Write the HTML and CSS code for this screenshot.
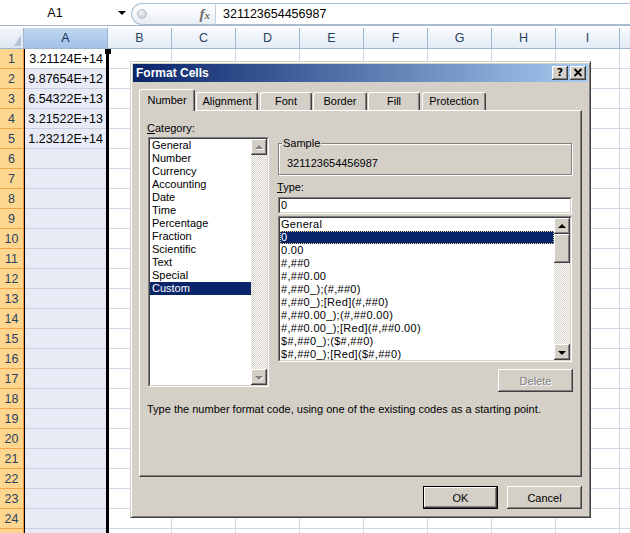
FILE: index.html
```html
<!DOCTYPE html>
<html>
<head>
<meta charset="utf-8">
<title>Format Cells</title>
<link rel="stylesheet" href="styles.css">
</head>
<body>
<div class="app">
  <div class="formula-bar">
    <div class="namebox"><span class="namebox-text">A1</span><span class="namebox-arrow"></span></div>
    <div class="fx-pill"><span class="fx-knob"></span><span class="fx-label">f<span class="fx-x">x</span></span></div>
    <div class="formula-input">321123654456987</div>
  </div>

  <div class="col-headers">
    <div class="corner"><svg class="corner-tri" width="7" height="11" viewBox="0 0 7 11"><polygon points="7,0 7,11 0,11" fill="#b4c4d8"/></svg></div>
    <div class="ch ch-a">A</div>
    <div class="ch">B</div>
    <div class="ch">C</div>
    <div class="ch">D</div>
    <div class="ch">E</div>
    <div class="ch">F</div>
    <div class="ch">G</div>
    <div class="ch">H</div>
    <div class="ch">I</div>
    <div class="ch ch-rest"></div>
  </div>

  <div class="sheet-body">
    <div class="row-headers">
      <div class="rh">1</div><div class="rh">2</div><div class="rh">3</div><div class="rh">4</div><div class="rh">5</div>
      <div class="rh">6</div><div class="rh">7</div><div class="rh">8</div><div class="rh">9</div><div class="rh">10</div>
      <div class="rh">11</div><div class="rh">12</div><div class="rh">13</div><div class="rh">14</div><div class="rh">15</div>
      <div class="rh">16</div><div class="rh">17</div><div class="rh">18</div><div class="rh">19</div><div class="rh">20</div>
      <div class="rh">21</div><div class="rh">22</div><div class="rh">23</div><div class="rh">24</div><div class="rh"></div>
    </div>
    <div class="col-a">
      <div class="cell cell-active">3.21124E+14</div>
      <div class="cell">9.87654E+12</div>
      <div class="cell">6.54322E+13</div>
      <div class="cell">3.21522E+13</div>
      <div class="cell">1.23212E+14</div>
      <div class="cell"></div><div class="cell"></div><div class="cell"></div><div class="cell"></div><div class="cell"></div>
      <div class="cell"></div><div class="cell"></div><div class="cell"></div><div class="cell"></div><div class="cell"></div>
      <div class="cell"></div><div class="cell"></div><div class="cell"></div><div class="cell"></div><div class="cell"></div>
      <div class="cell"></div><div class="cell"></div><div class="cell"></div><div class="cell"></div><div class="cell"></div>
      <span class="fill-handle"></span>
    </div>
    <div class="grid-rest"></div>
  </div>

  <div class="dialog">
    <div class="titlebar">
      <span class="title">Format Cells</span>
      <div class="title-btns">
        <span class="tbtn tbtn-help">?</span>
        <span class="tbtn"><svg width="10" height="9" viewBox="0 0 10 9"><path d="M1.5 1 L8.5 8 M8.5 1 L1.5 8" stroke="#000" stroke-width="1.8" fill="none"/></svg></span>
      </div>
    </div>
    <div class="dlg-body">
      <div class="tabs">
        <div class="tab tab-active tab-number">Number</div>
        <div class="tab tab-alignment">Alignment</div>
        <div class="tab tab-font">Font</div>
        <div class="tab tab-border">Border</div>
        <div class="tab tab-fill">Fill</div>
        <div class="tab tab-protection">Protection</div>
      </div>
      <div class="panel">
        <div class="panel-grid">
          <div class="left-col">
            <div class="label"><u>C</u>ategory:</div>
            <div class="listbox cat-list">
              <div class="listbox-inner">
                <div class="list-items">
                  <div class="item">General</div>
                  <div class="item">Number</div>
                  <div class="item">Currency</div>
                  <div class="item">Accounting</div>
                  <div class="item">Date</div>
                  <div class="item">Time</div>
                  <div class="item">Percentage</div>
                  <div class="item">Fraction</div>
                  <div class="item">Scientific</div>
                  <div class="item">Text</div>
                  <div class="item">Special</div>
                  <div class="item item-selected">Custom</div>
                </div>
                <div class="scrollbar">
                  <div class="sb-btn"><span class="arrow-up arrow-disabled"></span></div>
                  <div class="sb-track"></div>
                  <div class="sb-btn"><span class="arrow-down arrow-disabled"></span></div>
                </div>
              </div>
            </div>
          </div>
          <div class="right-col">
            <div class="groupbox">
              <span class="legend">Sample</span>
              <div class="sample-value">321123654456987</div>
            </div>
            <div class="label label-type"><u>T</u>ype:</div>
            <div class="textbox"><div class="textbox-inner">0</div></div>
            <div class="listbox fmt-list">
              <div class="listbox-inner">
                <div class="list-items">
                  <div class="item">General</div>
                  <div class="item item-selected item-focus">0</div>
                  <div class="item">0.00</div>
                  <div class="item">#,##0</div>
                  <div class="item">#,##0.00</div>
                  <div class="item">#,##0_);(#,##0)</div>
                  <div class="item">#,##0_);[Red](#,##0)</div>
                  <div class="item">#,##0.00_);(#,##0.00)</div>
                  <div class="item">#,##0.00_);[Red](#,##0.00)</div>
                  <div class="item">$#,##0_);($#,##0)</div>
                  <div class="item">$#,##0_);[Red]($#,##0)</div>
                </div>
                <div class="scrollbar">
                  <div class="sb-btn"><span class="arrow-up"></span></div>
                  <div class="sb-btn sb-thumb"></div>
                  <div class="sb-track"></div>
                  <div class="sb-btn"><span class="arrow-down"></span></div>
                </div>
              </div>
            </div>
            <div class="btn-row">
              <div class="btn btn-disabled">Delete</div>
            </div>
          </div>
        </div>
        <div class="description">Type the number format code, using one of the existing codes as a starting point.</div>
      </div>
      <div class="dlg-buttons">
        <div class="btn btn-default">OK</div>
        <div class="btn">Cancel</div>
      </div>
    </div>
  </div>
</div>
</body>
</html>
```

FILE: styles.css
```css
* { box-sizing: border-box; }
html, body { margin: 0; padding: 0; }
body {
  width: 630px;
  height: 533px;
  overflow: hidden;
  background: #fff;
  font-family: "Liberation Sans", Arial, sans-serif;
}
.app {
  position: relative;
  width: 630px;
  height: 533px;
  overflow: hidden;
  background: #fff;
}

/* ---------- formula bar ---------- */
.formula-bar {
  display: flex;
  height: 26px;
  border-bottom: 1px solid #a3b5cb;
  margin-bottom: 2px;
  font-size: 12.5px;
  color: #000;
}
.namebox {
  width: 131px;
  display: flex;
  align-items: center;
}
.namebox-text {
  width: 110px;
  text-align: center;
}
.namebox-arrow {
  margin-left: 8px;
  width: 0;
  height: 0;
  border-left: 4px solid transparent;
  border-right: 4px solid transparent;
  border-top: 4px solid #000;
}
.fx-pill {
  width: 84px;
  margin-top: 3px;
  height: 22px;
  border: 1px solid #a9bdd6;
  border-right: none;
  border-radius: 11px 0 0 11px;
  background: linear-gradient(#ffffff, #e9eef5);
  display: flex;
  align-items: center;
  justify-content: space-between;
  padding: 0 5px 0 5px;
}
.fx-knob {
  width: 10px;
  height: 10px;
  border-radius: 50%;
  background: radial-gradient(circle at 40% 35%, #f4f5f7, #bcc3cc);
  border: 1px solid #b8c0ca;
}
.fx-label {
  font-family: "Liberation Serif", serif;
  font-style: italic;
  font-weight: bold;
  font-size: 15px;
  color: #6b6b6b;
}
.fx-x { font-size: 11px; }
.formula-input {
  flex: 1;
  margin-top: 3px;
  height: 22px;
  border: 1px solid #a9bdd6;
  border-right: none;
  border-left-color: #c3d0e0;
  display: flex;
  align-items: center;
  padding-left: 7px;
  background: #fff;
}

/* ---------- headers ---------- */
.col-headers {
  display: flex;
  height: 21px;
  font-size: 12.5px;
  color: #27415f;
}
.corner {
  width: 24px;
  border-right: 1px solid #9eb6ce;
  border-bottom: 1px solid #9eb6ce;
  background: linear-gradient(#f3f6fb, #dde6f1);
  display: flex;
  align-items: flex-end;
  justify-content: flex-end;
  padding: 0 2px 2px 0;
}
.ch {
  width: 64px;
  flex: none;
  border-right: 1px solid #9eb6ce;
  border-bottom: 1px solid #9eb6ce;
  background: linear-gradient(#f9fbfd, #e2eaf5);
  text-align: center;
  line-height: 20px;
}
.ch-a {
  width: 84px;
  background: linear-gradient(#bed6f1, #a2c1e8);
  color: #15314f;
}
.ch-rest { flex: 1; border-right: none; }

/* ---------- sheet body ---------- */
.sheet-body {
  display: flex;
  height: 484px;
  font-size: 12.5px;
}
.row-headers {
  width: 24px;
  flex: none;
  display: flex;
  flex-direction: column;
}
.rh {
  height: 20px;
  flex: none;
  background: #ffd68f;
  border-right: 1px solid #f29436;
  border-bottom: 1px solid #f3a54a;
  text-align: center;
  line-height: 20px;
  color: #27415f;
}
.col-a {
  position: relative;
  width: 84px;
  flex: none;
  display: flex;
  flex-direction: column;
}
.col-a::after {
  content: "";
  position: absolute;
  left: 0;
  top: 0;
  bottom: 0;
  right: -1px;
  border-left: 1px solid #000;
  border-right: 3px solid #000;
  pointer-events: none;
}
.fill-handle {
  position: absolute;
  top: 0;
  right: -3px;
  width: 6px;
  height: 5px;
  background: #000;
  z-index: 2;
}
.cell {
  height: 20px;
  flex: none;
  background: #e8ebf5;
  border-bottom: 1px solid #c8cfe1;
  border-right: 1px solid #c8cfe1;
  text-align: right;
  padding-right: 4px;
  line-height: 20px;
  color: #000;
}
.cell-active { background: #fff; }
.grid-rest {
  flex: 1;
  background-color: #fff;
  background-image:
    linear-gradient(to right, transparent 63px, #d0d7e5 63px),
    linear-gradient(to bottom, transparent 19px, #d0d7e5 19px);
  background-size: 64px 100%, 100% 20px;
}

/* ---------- dialog ---------- */
.dialog {
  position: absolute;
  left: 130px;
  top: 61px;
  width: 461px;
  height: 457px;
  background: #d4d0c8;
  border: 1px solid;
  border-color: #d4d0c8 #404040 #404040 #d4d0c8;
  box-shadow: inset 1px 1px 0 #fff, inset -1px -1px 0 #808080;
  padding: 2px;
  font-family: "Liberation Sans", Arial, sans-serif;
  font-size: 11px;
  color: #000;
  display: flex;
  flex-direction: column;
  z-index: 5;
}
.titlebar {
  height: 18px;
  flex: none;
  background: linear-gradient(to right, #0a246a, #a6caf0);
  display: flex;
  align-items: center;
  justify-content: space-between;
  padding: 0 2px 0 3px;
}
.title {
  color: #fff;
  font-weight: bold;
  font-size: 12px;
}
.title-btns {
  display: flex;
  gap: 2px;
}
.tbtn {
  width: 16px;
  height: 14px;
  background: #d4d0c8;
  box-shadow: inset -1px -1px 0 #404040, inset 1px 1px 0 #fff, inset -2px -2px 0 #808080;
  display: flex;
  align-items: center;
  justify-content: center;
  font-weight: bold;
  font-size: 12px;
  line-height: 12px;
  padding-bottom: 1px;
}
.tbtn-help { font-family: "DejaVu Sans", sans-serif; font-size: 11px; }

.dlg-body {
  padding: 7px 6px 0 6px;
  display: flex;
  flex-direction: column;
}
.tabs {
  display: flex;
  align-items: flex-end;
  height: 21px;
  position: relative;
  z-index: 2;
}
.tab {
  height: 18px;
  background: #d4d0c8;
  border-top: 1px solid #fff;
  border-left: 1px solid #fff;
  border-right: 1px solid #404040;
  box-shadow: inset -1px 0 0 #808080;
  border-radius: 3px 3px 0 0;
  text-align: center;
  line-height: 17px;
  flex: none;
}
.tab-active {
  height: 22px;
  margin-bottom: -1px;
  line-height: 20px;
}
.tab-number { width: 56px; }
.tab-alignment { width: 62px; margin-left: 1px; }
.tab-font { width: 52px; margin-left: 2px; }
.tab-border { width: 54px; margin-left: 1px; }
.tab-fill { width: 52px; margin-left: 1px; }
.tab-protection { width: 64px; margin-left: 2px; }

.panel {
  height: 367px;
  border-top: 1px solid #fff;
  border-left: 1px solid #fff;
  border-right: 1px solid #404040;
  border-bottom: 1px solid #404040;
  box-shadow: inset -1px -1px 0 #808080;
  padding: 10px 8px 0 8px;
}
.panel-grid {
  display: grid;
  grid-template-columns: 121px 294px;
  column-gap: 9px;
}
.label {
  height: 14px;
  line-height: 14px;
  margin-left: -1px;
}
.left-col .label { margin-bottom: 2px; }

.listbox {
  border: 1px solid;
  border-color: #808080 #fff #fff #808080;
}
.listbox-inner {
  height: 100%;
  border: 1px solid;
  border-color: #404040 #d4d0c8 #d4d0c8 #404040;
  background: #fff;
  display: flex;
}
.cat-list { height: 250px; }
.fmt-list { height: 146px; margin-top: 2px; }
.list-items {
  flex: 1;
  overflow: hidden;
}
.item {
  height: 13px;
  line-height: 13px;
  padding-left: 2px;
  white-space: nowrap;
}
.fmt-list .item { padding-left: 1px; letter-spacing: 0.3px; }
.item-selected {
  background: #0a246a;
  color: #fff;
}
.item-focus {
  outline: 1px dotted #e9d48f;
  outline-offset: -1px;
}
.scrollbar {
  width: 16px;
  flex: none;
  display: flex;
  flex-direction: column;
}
.sb-btn {
  height: 16px;
  flex: none;
  background: #d4d0c8;
  box-shadow: inset -1px -1px 0 #404040, inset 1px 1px 0 #fff, inset -2px -2px 0 #808080;
  display: flex;
  align-items: center;
  justify-content: center;
}
.sb-thumb { height: 29px; }
.sb-track {
  flex: 1;
  background-color: #fff;
  background-image: repeating-conic-gradient(#d4d0c8 0 25%, #fff 0 50%);
  background-size: 2px 2px;
}
.arrow-up, .arrow-down {
  width: 0;
  height: 0;
  border-left: 4px solid transparent;
  border-right: 4px solid transparent;
}
.arrow-up { border-bottom: 4px solid #000; }
.arrow-down { border-top: 4px solid #000; margin-top: 1px; }
.arrow-up.arrow-disabled { border-bottom-color: #808080; filter: drop-shadow(1px 1px 0 #fff); }
.arrow-down.arrow-disabled { border-top-color: #808080; filter: drop-shadow(1px 1px 0 #fff); }

.groupbox {
  position: relative;
  margin-top: 22px;
  height: 32px;
  border: 1px solid #808080;
  box-shadow: 1px 1px 0 #fff, inset 1px 1px 0 #fff;
  padding: 12px 0 0 8px;
}
.legend {
  position: absolute;
  left: 3px;
  top: -8px;
  padding: 0 1px;
  background: #d4d0c8;
  line-height: 14px;
}
.sample-value { line-height: 14px; }
.label-type { margin-top: 5px; }
.textbox {
  margin-top: 3px;
  height: 17px;
  border: 1px solid;
  border-color: #808080 #fff #fff #808080;
}
.textbox-inner {
  height: 100%;
  border: 1px solid;
  border-color: #404040 #d4d0c8 #d4d0c8 #404040;
  background: #fff;
  padding-left: 1px;
  line-height: 13px;
}
.btn-row {
  display: flex;
  justify-content: flex-end;
  margin-top: 7px;
  margin-right: -1px;
}
.btn {
  width: 75px;
  height: 23px;
  background: #d4d0c8;
  box-shadow: inset -1px -1px 0 #404040, inset 1px 1px 0 #fff, inset -2px -2px 0 #808080;
  display: flex;
  align-items: center;
  justify-content: center;
}
.btn-disabled {
  color: #808080;
  text-shadow: 1px 1px 0 #fff;
}
.btn-default {
  border: 1px solid #000;
}
.description {
  margin-top: 10px;
  line-height: 14px;
  margin-left: -1px;
}
.dlg-buttons {
  display: flex;
  justify-content: flex-end;
  gap: 9px;
  margin-top: 9px;
}
```
